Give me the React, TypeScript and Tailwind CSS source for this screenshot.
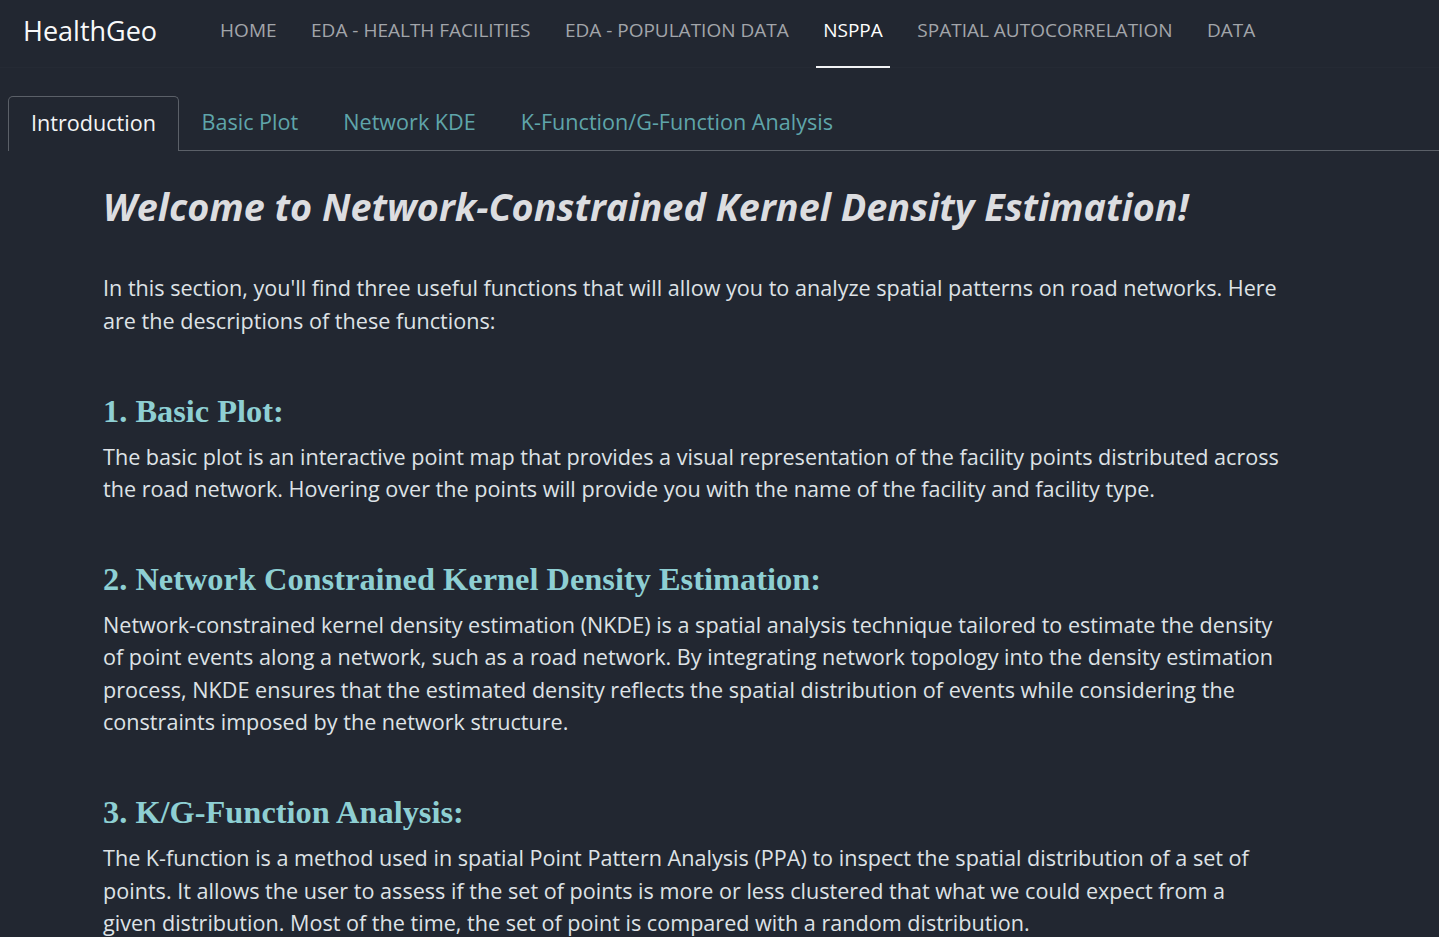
import React from 'react';

const navLinks = [
  { name: 'HOME', active: false },
  { name: 'EDA - HEALTH FACILITIES', active: false },
  { name: 'EDA - POPULATION DATA', active: false },
  { name: 'NSPPA', active: true },
  { name: 'SPATIAL AUTOCORRELATION', active: false },
  { name: 'DATA', active: false },
];

const tabs = ['Introduction', 'Basic Plot', 'Network KDE', 'K-Function/G-Function Analysis'];

const sections = [
  {
    title: '1. Basic Plot:',
    body: 'The basic plot is an interactive point map that provides a visual representation of the facility points distributed across the road network. Hovering over the points will provide you with the name of the facility and facility type.',
  },
  {
    title: '2. Network Constrained Kernel Density Estimation:',
    body: 'Network-constrained kernel density estimation (NKDE) is a spatial analysis technique tailored to estimate the density of point events along a network, such as a road network. By integrating network topology into the density estimation process, NKDE ensures that the estimated density reflects the spatial distribution of events while considering the constraints imposed by the network structure.',
  },
  {
    title: '3. K/G-Function Analysis:',
    body: 'The K-function is a method used in spatial Point Pattern Analysis (PPA) to inspect the spatial distribution of a set of points. It allows the user to assess if the set of points is more or less clustered that what we could expect from a given distribution. Most of the time, the set of point is compared with a random distribution.',
  },
];

const App = () => {
  return (
    <div className="min-h-[937px] bg-[#222731] font-['Open_Sans',sans-serif] text-[#dee2e6]">
      {/* Top navbar */}
      <nav className="flex h-[68px] items-start border-b border-[#252a34]">
        <span className="ml-[23px] mt-[13px] text-[27px] leading-[36px] text-[#f8f9fa]">HealthGeo</span>
        <div className="ml-[56px] flex gap-[20.5px]">
          {navLinks.map((link) => (
            <a
              key={link.name}
              className={
                link.active
                  ? 'h-[68px] border-b-2 border-[#f1f2f4] px-[7px] pt-[16px] text-[19px] leading-[28px] text-white'
                  : 'h-[68px] border-b-2 border-transparent px-[7px] pt-[16px] text-[19px] leading-[28px] text-[#a2a5aa]'
              }
            >
              {link.name}
            </a>
          ))}
        </div>
      </nav>

      {/* Tabs */}
      <div className="mt-[28px] flex pl-[8px]">
        {tabs.map((tab, i) => (
          <div
            key={tab}
            className={
              i === 0
                ? 'rounded-t-[5px] border border-b-0 border-[#5b6068] px-[22px] pb-[11.6px] pt-[10px] text-[21.6px] leading-[32.4px] text-[#f3f4f5]'
                : 'border-b border-[#5b6068] px-[22.5px] pb-[11.6px] pt-[10px] text-[21.6px] leading-[32.4px] text-[#5fa5aa]'
            }
          >
            {tab}
          </div>
        ))}
        <div className="flex-1 border-b border-[#5b6068]" />
      </div>

      {/* Content */}
      <main className="w-[1282px] pl-[103px] pt-[33px]">
        <h1 className="mb-[43px] text-[37.8px] font-bold italic leading-[45.4px] text-[#dcdde0]">
          Welcome to Network-Constrained Kernel Density Estimation!
        </h1>
        <p className="text-[21.6px] leading-[32.4px]">
          In this section, you'll find three useful functions that will allow you to analyze spatial patterns on road networks. Here are the descriptions of these functions:
        </p>

        {sections.map((s) => (
          <section key={s.title} className="mt-[54.6px]">
            <h4 className="mb-[10px] font-['Liberation_Serif',serif] text-[32.4px] font-bold leading-[38.9px] text-[#8ecfd3]">
              {s.title}
            </h4>
            <p className="text-[21.6px] leading-[32.4px]">{s.body}</p>
          </section>
        ))}
      </main>
    </div>
  );
};

export default App;
